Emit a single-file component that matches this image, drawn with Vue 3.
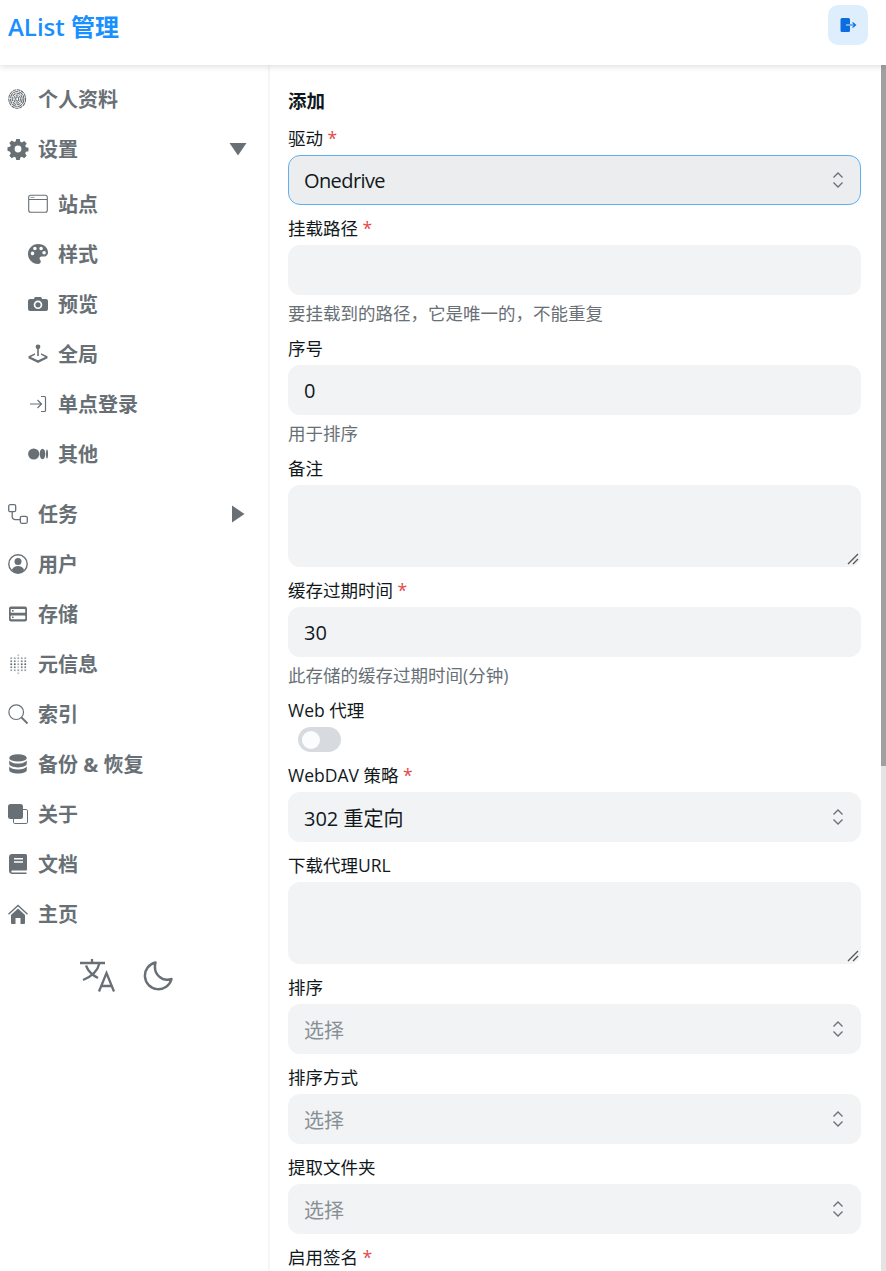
<script setup>
const menu = [
  { t: '个人资料', i: 'finger' },
  { t: '设置', i: 'gear', arrow: 'down' },
  { t: '站点', i: 'window', sub: true },
  { t: '样式', i: 'palette', sub: true },
  { t: '预览', i: 'camera', sub: true },
  { t: '全局', i: 'joy', sub: true },
  { t: '单点登录', i: 'login', sub: true },
  { t: '其他', i: 'medium', sub: true, last: true },
  { t: '任务', i: 'flow', arrow: 'right' },
  { t: '用户', i: 'user' },
  { t: '存储', i: 'storage' },
  { t: '元信息', i: 'dots' },
  { t: '索引', i: 'search' },
  { t: '备份 & 恢复', i: 'db' },
  { t: '关于', i: 'copy' },
  { t: '文档', i: 'book' },
  { t: '主页', i: 'home' },
]
const dots = []
for (let y = 0; y < 7; y++) for (let x = 0; x < 5; x++) {
  const o = x === 2 ? (y % 2 ? 0.6 : 0.4) : (y > 0 && y < 6 ? 1 - Math.abs(3 - y) * 0.2 : 0)
  if (o) dots.push({ x: 2.4 + x * 3.5, y: 0.4 + y * 3, o })
}
const fields = [
  { l: '驱动', req: true, k: 'select', v: 'Onedrive', focus: true },
  { l: '挂载路径', req: true, k: 'input', h: '要挂载到的路径，它是唯一的，不能重复' },
  { l: '序号', k: 'input', v: '0', h: '用于排序' },
  { l: '备注', k: 'area' },
  { l: '缓存过期时间', req: true, k: 'input', v: '30', h: '此存储的缓存过期时间(分钟)' },
  { l: 'Web 代理', k: 'switch' },
  { l: 'WebDAV 策略', req: true, k: 'select', v: '302 重定向' },
  { l: '下载代理URL', k: 'area' },
  { l: '排序', k: 'select', p: '选择' },
  { l: '排序方式', k: 'select', p: '选择' },
  { l: '提取文件夹', k: 'select', p: '选择' },
  { l: '启用签名', req: true, k: 'switch' },
]
</script>

<template>
  <div class="page">
    <header class="top">
      <h1 class="brand">AList 管理</h1>
      <button class="logout" aria-label="退出">
        <svg width="18" height="18" viewBox="0 0 18 18">
          <path d="M3 2h6.500A1.500 1.500 0 0 1 11 3.500V8H7v2h4v4.500A1.500 1.500 0 0 1 9.500 16H3a1.500 1.500 0 0 1-1.500-1.500v-11A1.500 1.500 0 0 1 3 2z" fill="#0b6de0" />
          <path d="M7 9h9.500M13.500 6.500L16.500 9l-3 2.500" fill="none" stroke="#0b6de0" stroke-width="1.200" />
        </svg>
      </button>
    </header>
    <div class="body">
      <aside class="side">
        <nav class="menu">
          <div v-for="m in menu" :key="m.t" class="item" :class="{ sub: m.sub, last: m.last }">
            <svg class="ico" viewBox="0 0 20 20">
              <g v-if="m.i === 'finger'" fill="none" stroke="#60676d" stroke-width="1.050">
                <ellipse cx="9.200" cy="10" rx="8.400" ry="9.200" stroke-dasharray="3.500 .6" />
                <ellipse cx="9.200" cy="10" rx="6.700" ry="7.500" stroke-dasharray="5 .8" />
                <ellipse cx="9.200" cy="10" rx="5" ry="5.800" stroke-dasharray="4 .8" />
                <ellipse cx="9.200" cy="10" rx="3.300" ry="4" stroke-dasharray="3 .8" />
                <ellipse cx="9.200" cy="10" rx="1.500" ry="2.200" />
              </g>
              <path v-else-if="m.i === 'gear'" fill-rule="evenodd" fill="#687076" d="M8.200 0h3.600l.5 2.700 1.600.7 2.300-1.500 2.500 2.500-1.500 2.300.7 1.600 2.600.5v3.500l-2.600.5-.7 1.600 1.500 2.300-2.500 2.500-2.300-1.500-1.600.7-.5 2.600H8.200l-.5-2.600-1.600-.7-2.300 1.500-2.500-2.500 1.500-2.300-.7-1.600L-.5 11.800V8.300l2.600-.5.700-1.600-1.500-2.300 2.500-2.500 2.300 1.500 1.600-.7zM10 6.600a3.400 3.400 0 1 0 0 6.800 3.400 3.400 0 0 0 0-6.800z" />
              <g v-else-if="m.i === 'window'" fill="none" stroke="#687076">
                <rect x="0.700" y="1.200" width="18.600" height="17" rx="2" stroke-width="1.100" />
                <path d="M1 5.500h18" stroke-width="1" />
                <path d="M2.500 3.400h4" stroke-width=".7" />
              </g>
              <path v-else-if="m.i === 'palette'" fill-rule="evenodd" fill="#687076" d="M10 0C4.500 0 0 4.500 0 10s4.500 10 10 10c1.700 0 2.800-1 2.800-2.500 0-.8-.4-1.300-.7-1.800-.3-.4-.5-.8-.5-1.300 0-1 .8-1.800 1.900-1.800h2.400C18 12.600 20 10.800 20 8.200 20 3.500 15.500 0 10 0zM4.500 11.200a1.800 1.800 0 1 1 0-3.600 1.800 1.800 0 0 1 0 3.600zm2.400-4.900a1.800 1.800 0 1 1 0-3.600 1.800 1.800 0 0 1 0 3.600zm6.200 0a1.800 1.800 0 1 1 0-3.600 1.800 1.800 0 0 1 0 3.600zm3 4.300a1.800 1.800 0 1 1 0-3.600 1.800 1.800 0 0 1 0 3.600z" />
              <path v-else-if="m.i === 'camera'" fill-rule="evenodd" fill="#687076" d="M7 3h6l1.200 2H18a2 2 0 0 1 2 2v8a2 2 0 0 1-2 2H2a2 2 0 0 1-2-2V7a2 2 0 0 1 2-2h3.800zM10 6.500a4.300 4.300 0 1 0 0 8.600 4.300 4.300 0 0 0 0-8.600zm0 1.700a2.600 2.600 0 1 1 0 5.200 2.600 2.600 0 0 1 0-5.200z" />
              <g v-else-if="m.i === 'joy'" fill="#687076">
                <circle cx="10" cy="2.800" r="2.400" />
                <rect x="9.200" y="4" width="1.600" height="8" />
                <path d="M7 9.300v1.500L2.800 13 10 16.300 17.200 13 13 10.800V9.300l6.500 3v2L10 19 .5 14.300v-2z" />
              </g>
              <g v-else-if="m.i === 'login'" fill="none" stroke="#687076" stroke-width="1.200">
                <path d="M2 10h11.500M9.500 6l4 4-4 4" />
                <path d="M13 2.500h3.500a1 1 0 0 1 1 1v13a1 1 0 0 1-1 1H13" />
              </g>
              <g v-else-if="m.i === 'medium'" fill="#687076">
                <circle cx="5.700" cy="10" r="5.600" />
                <ellipse cx="14.500" cy="10" rx="2.800" ry="5.200" />
                <ellipse cx="19" cy="10" rx="1" ry="4.600" />
              </g>
              <g v-else-if="m.i === 'flow'" fill="none" stroke="#687076" stroke-width="1.300">
                <rect x="0.700" y="0.700" width="7" height="7" rx="1.500" />
                <rect x="12.300" y="12.300" width="7" height="7" rx="1.500" />
                <path d="M4.200 7.700v5a3 3 0 0 0 3 3h5" />
              </g>
              <g v-else-if="m.i === 'user'">
                <circle cx="10" cy="10" r="9.200" fill="none" stroke="#687076" stroke-width="1.400" />
                <circle cx="10" cy="7.500" r="3.500" fill="#687076" />
                <path d="M3.800 16c1-2.500 3.500-4 6.200-4s5.200 1.500 6.200 4c-1.500 1.800-3.800 3.200-6.200 3.200S5.300 17.800 3.800 16z" fill="#687076" />
              </g>
              <g v-else-if="m.i === 'storage'">
                <path fill-rule="evenodd" fill="#687076" d="M3 2.500h14a2 2 0 0 1 2 2v11a2 2 0 0 1-2 2H3a2 2 0 0 1-2-2v-11a2 2 0 0 1 2-2zm.500 2.400a.8.8 0 0 0-.8.8v2.200a.8.8 0 0 0 .8.800h13a.8.800 0 0 0 .8-.8V5.700a.8.800 0 0 0-.8-.8zm0 6.500a.8.8 0 0 0-.8.8v2.200a.8.8 0 0 0 .8.8h13a.8.8 0 0 0 .8-.8v-2.200a.8.8 0 0 0-.8-.8z" />
                <rect x="4" y="6" width="1.600" height="1.600" fill="#687076" />
                <rect x="4" y="12.500" width="1.600" height="1.600" fill="#687076" />
              </g>
              <g v-else-if="m.i === 'dots'" fill="#5a6167">
                <rect v-for="(d, n) in dots" :key="n" :x="d.x" :y="d.y" width="1.700" height="1.700" :opacity="d.o" />
              </g>
              <g v-else-if="m.i === 'search'" fill="none" stroke="#687076">
                <circle cx="8.200" cy="8.200" r="7.300" stroke-width="1.200" />
                <path d="M13.500 13.500l6 6" stroke-width="1.800" />
              </g>
              <g v-else-if="m.i === 'db'" fill="#687076">
                <ellipse cx="10" cy="3.900" rx="8.800" ry="3.700" />
                <path d="M1.200 6.600C2.500 8.600 6 9.500 10 9.500s7.500-.9 8.800-2.900v3.200c0 2-3.900 3.600-8.800 3.600s-8.800-1.600-8.800-3.600z" />
                <path d="M1.200 12.500c1.300 2 4.800 2.900 8.800 2.900s7.500-.9 8.800-2.900v3.400c0 2-3.900 3.500-8.800 3.500s-8.800-1.500-8.800-3.500z" />
              </g>
              <g v-else-if="m.i === 'copy'">
                <path d="M13 5.500h5.200a1.300 1.300 0 0 1 1.300 1.300v11.400a1.300 1.300 0 0 1-1.300 1.300H6.800a1.300 1.300 0 0 1-1.300-1.300V15" fill="none" stroke="#687076" stroke-width="1" />
                <rect x="0" y="0" width="15" height="15" rx="2.500" fill="#687076" />
              </g>
              <g v-else-if="m.i === 'book'">
                <path fill-rule="evenodd" fill="#687076" d="M4 0h13.500A1.500 1.500 0 0 1 19 1.500V15.500a1 1 0 0 1-1 1H4.500c-.8 0-1.200.5-1.200 1s.4 1 1.200 1H18.500V20H4A3.500 3.500 0 0 1 1 16.500V3.200A3.200 3.200 0 0 1 4 0zM6 4v1.500h9V4zm0 3.300v1.500h9V7.300z" />
              </g>
              <g v-else-if="m.i === 'home'">
                <path d="M3 11l7-6.500 7 6.500v8a1 1 0 0 1-1 1h-3.500v-6h-5v6H4a1 1 0 0 1-1-1z" fill="#687076" />
                <path d="M.5 10.200L10 1.500l9.500 8.700" fill="none" stroke="#687076" stroke-width="1.300" />
              </g>
            </svg>
            <span class="lbl">{{ m.t }}</span>
            <svg v-if="m.arrow === 'down'" class="arrow" width="18" height="14" viewBox="0 0 18 14"><path d="M.5 1h17L9 13.500z" fill="#687076" /></svg>
            <svg v-if="m.arrow === 'right'" class="arrow" width="18" height="18" viewBox="0 0 18 18"><path d="M3 .5V17.500L15.500 9z" fill="#687076" /></svg>
          </div>
        </nav>
        <div class="tools">
          <svg width="36" height="33" viewBox="0 0 36 33" fill="none" stroke="#687076" stroke-width="2.300">
            <path d="M0 4h25M12 0v4M19.500 4c-1.500 7-8 13.500-16.500 17M6 6.500c2 5.500 6 9.500 12 12.500" />
            <path d="M19 32.500L26.500 14l7.500 18.500M21.500 27h10" />
          </svg>
          <svg width="30" height="30" viewBox="0 0 30 30" fill="none" stroke="#687076" stroke-width="2.500">
            <path d="M12.500 1.500A13.500 13.500 0 1 0 28.500 18C20 21 9.500 14 12.500 1.500z" stroke-linejoin="round" />
          </svg>
        </div>
      </aside>
      <main class="main">
        <h2 class="title">添加</h2>
        <div v-for="f in fields" :key="f.l" class="field">
          <label class="label">{{ f.l }}<span v-if="f.req" class="req"> *</span></label>
          <div v-if="f.k === 'select'" class="box select" :class="{ focus: f.focus }">
            <span :class="{ ph: f.p }">{{ f.v || f.p }}</span>
            <svg class="updown" width="16" height="18" viewBox="0 0 16 18" fill="none" stroke="#687076" stroke-width="1.300"><path d="M3.500 6.500L8 2l4.500 4.500M3.500 11.500L8 16l4.500-4.500" /></svg>
          </div>
          <div v-else-if="f.k === 'input'" class="box"><span>{{ f.v }}</span></div>
          <div v-else-if="f.k === 'area'" class="box area">
            <svg class="grip" width="12" height="12" viewBox="0 0 12 12" stroke="#555" stroke-width="1.300" fill="none"><path d="M1 11L11 1M6 11l5-5" /></svg>
          </div>
          <div v-else class="switch"><i class="knob"></i></div>
          <p v-if="f.h" class="help">{{ f.h }}</p>
        </div>
      </main>
      <div class="scroll"><div class="thumb"></div></div>
    </div>
  </div>
</template>

<style>
html, body { margin: 0; height: 100%; overflow: hidden; background: #fff; }
</style>

<style scoped>
.page {
  width: 886px;
  height: 1271px;
  overflow: hidden;
  display: flex;
  flex-direction: column;
  background: #fff;
  color: #11181c;
  font-family: "Open Sans", "Noto Sans CJK SC", sans-serif;
}
.top {
  height: 65px;
  flex: none;
  box-sizing: border-box;
  display: flex;
  justify-content: space-between;
  padding: 5px 18px 0 8px;
  box-shadow: 0 2px 6px rgba(0, 0, 0, 0.12);
  position: relative;
  z-index: 1;
}
.brand {
  margin: 0;
  font-size: 24px;
  line-height: 43px;
  font-weight: 600;
  color: #1890ff;
}
.logout {
  width: 40px;
  height: 40px;
  border: 0;
  padding: 0;
  border-radius: 10px;
  background: #deeefd;
  display: flex;
  align-items: center;
  justify-content: center;
}
.body { flex: 1; display: flex; min-height: 0; }
.side {
  width: 270px;
  flex: none;
  box-sizing: border-box;
  border-right: 2px solid #f6f6f7;
  padding-top: 9px;
}
.item {
  height: 50px;
  display: flex;
  align-items: center;
  padding-left: 8px;
  position: relative;
  font-size: 20px;
  font-weight: 700;
  color: #687076;
}
.item.sub { padding-left: 28px; }
.item.sub:nth-child(3) { margin-top: 5px; }
.item.last { margin-bottom: 10px; }
.ico { width: 20px; height: 20px; flex: none; margin-right: 10px; overflow: visible; }
.lbl { line-height: 30px; padding-top: 2px; }
.arrow { position: absolute; left: 229px; top: 50%; transform: translateY(-50%); }
.tools {
  display: flex;
  align-items: center;
  gap: 27px;
  padding: 20px 0 0 80px;
}
.main {
  flex: 1;
  min-width: 0;
  padding: 22px 20px 0 18px;
  overflow: hidden;
}
.title {
  margin: 0 0 12px;
  font-size: 18.5px;
  line-height: 27px;
  font-weight: 700;
  color: #11181c;
}
.field { margin-bottom: 11px; }
.label {
  display: block;
  font-size: 17.500px;
  line-height: 24px;
  margin-bottom: 5px;
  color: #11181c;
}
.req { color: #e5484d; }
.box {
  height: 50px;
  box-sizing: border-box;
  border-radius: 12px;
  background: #f1f3f5;
  display: flex;
  align-items: center;
  padding: 0 16px;
  font-size: 20px;
  color: #11181c;
  position: relative;
}
.select { justify-content: space-between; padding-right: 15px; }
.focus { border: 1px solid #5eb0ef; background: #ecedef; padding-left: 15px; padding-right: 14px; }
.focus span { letter-spacing: -0.6px; }
.ph { color: #889096; }
.area { height: 82px; }
.grip { position: absolute; right: 2px; bottom: 2px; }
.switch {
  width: 43px;
  height: 25px;
  margin-left: 10px;
  border-radius: 13px;
  background: #d7dbdf;
  display: flex;
  align-items: center;
  padding-left: 4px;
  box-sizing: border-box;
}
.knob { width: 18px; height: 18px; border-radius: 50%; background: #fbfcfd; display: block; }
.help {
  margin: 6px 0 -1px;
  font-size: 17.500px;
  line-height: 25px;
  color: #687076;
}
.scroll { width: 5px; flex: none; background: #e4e4e4; }
.thumb { height: 701px; background: #a0a0a0; }
</style>
